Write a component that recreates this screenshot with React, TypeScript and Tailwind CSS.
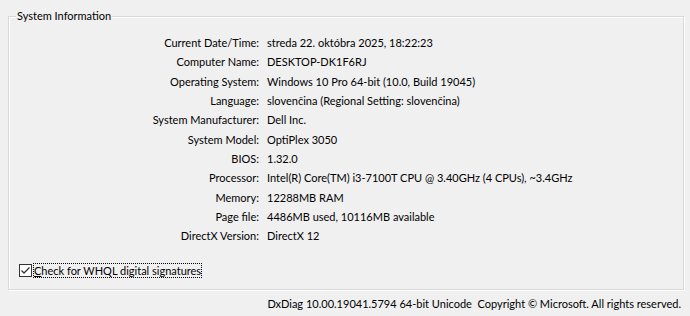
import React from "react";

const rows: [string, string][] = [
  ["Current Date/Time:", "streda 22. októbra 2025, 18:22:23"],
  ["Computer Name:", "DESKTOP-DK1F6RJ"],
  ["Operating System:", "Windows 10 Pro 64-bit (10.0, Build 19045)"],
  ["Language:", "slovenčina (Regional Setting: slovenčina)"],
  ["System Manufacturer:", "Dell Inc."],
  ["System Model:", "OptiPlex 3050"],
  ["BIOS:", "1.32.0"],
  ["Processor:", "Intel(R) Core(TM) i3-7100T CPU @ 3.40GHz (4 CPUs), ~3.4GHz"],
  ["Memory:", "12288MB RAM"],
  ["Page file:", "4486MB used, 10116MB available"],
  ["DirectX Version:", "DirectX 12"],
];

export default function App() {
  return (
    <div
      className="w-[690px] h-[316px] bg-[#f0f0f0] text-black text-[11px] overflow-hidden"
      style={{ fontFamily: '"Segoe UI", Lato, "Noto Sans", sans-serif' }}
    >
      <div className="pt-[16px] pl-[8px]">
        <div className="relative w-[676px] h-[274px] border border-[#d9d9d9] shadow-[inset_1px_1px_0_#ffffff,1px_1px_0_#ffffff]">
          <div className="absolute left-[7px] top-[-9px] px-[1px] bg-[#f0f0f0] leading-[16px]">
            System Information
          </div>
          <div className="pt-[16px] flex flex-col">
            {rows.map(([k, v]) => (
              <div key={k} className="flex h-[19.3px] items-center leading-[15px]">
                <div className="w-[250px] text-right whitespace-nowrap">{k}</div>
                <div className="pl-[8px] whitespace-nowrap">{v}</div>
              </div>
            ))}
          </div>
          <div className="absolute left-[10px] top-[246px] flex items-center">
            <div className="w-[13px] h-[13px] border border-[#333333] bg-white flex items-center justify-center">
              <svg width="11" height="11" viewBox="0 0 11 11">
                <path d="M1.5 5.5 L4 8 L9.5 2.5" fill="none" stroke="#333333" strokeWidth="1.3" />
              </svg>
            </div>
            <div className="ml-[1px] border border-dotted border-black leading-[13px] px-[0px]">
              <span className="underline decoration-1 underline-offset-1">C</span>heck for WHQL digital signatures
            </div>
          </div>
        </div>
      </div>
      <div className="flex justify-end pr-[9px] pt-[6px] leading-[16px] whitespace-pre">
        DxDiag 10.00.19041.5794 64-bit Unicode  Copyright © Microsoft. All rights reserved.
      </div>
    </div>
  );
}
